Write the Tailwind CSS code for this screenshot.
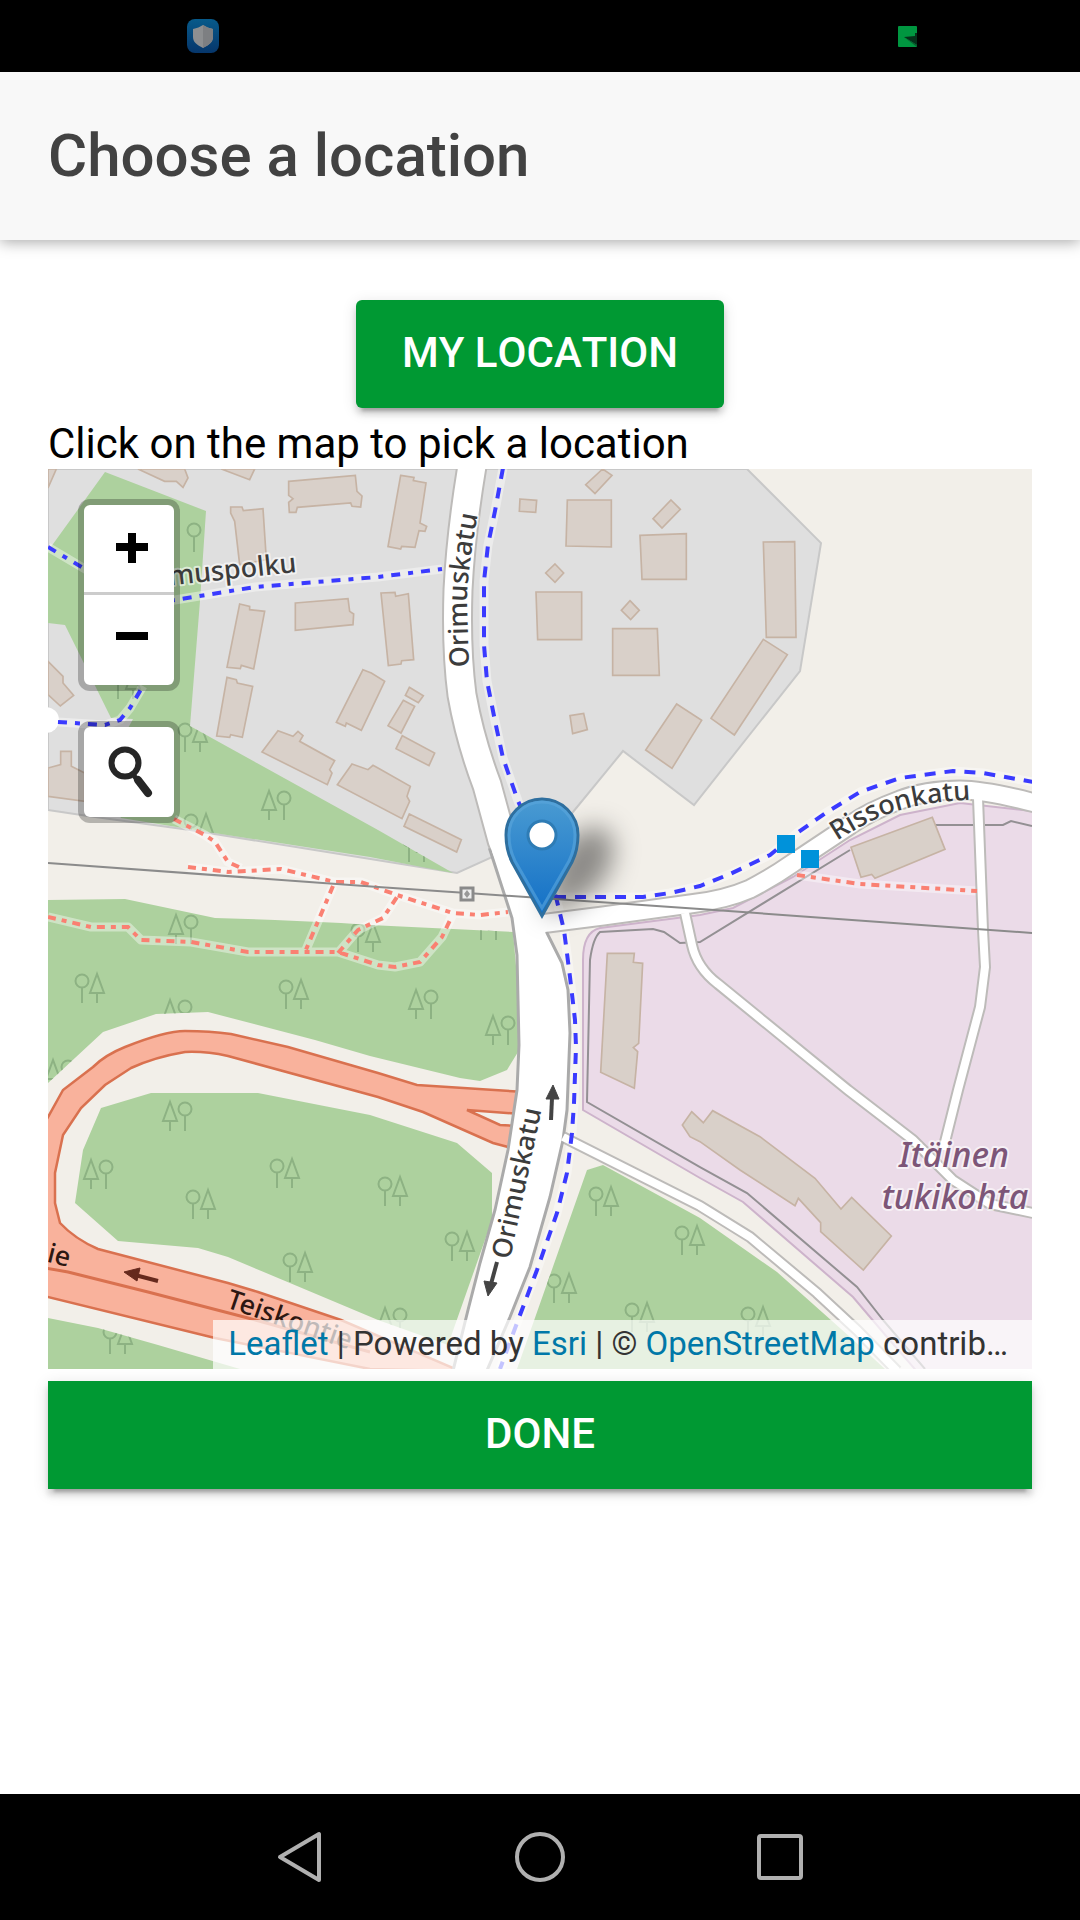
<!DOCTYPE html>
<html lang="en">
<head>
<meta charset="utf-8">
<meta name="viewport" content="width=device-width, initial-scale=1">
<title>Choose a location</title>
<script src="https://cdn.jsdelivr.net/npm/@tailwindcss/browser@4"></script>
</head>
<body class="flex min-h-screen flex-col bg-white font-['Roboto',sans-serif] text-black">

<!-- Status bar -->
<div class="flex h-[72px] items-center justify-between bg-black pr-[163px] pl-[186px]">
  <svg class="size-[34px]" viewBox="0 0 34 34" aria-hidden="true">
    <defs><linearGradient id="tile" x2="0" y2="1"><stop stop-color="#075a8a"/><stop offset="1" stop-color="#06366b"/></linearGradient></defs>
    <rect x="1" y="0" width="32" height="34" rx="8" fill="url(#tile)"/>
    <path d="M17 6c3 2 6 3 10 4v8c0 5-4 8-10 11-6-3-10-6-10-11v-8c4-1 7-2 10-4z" fill="#8d8f91"/>
    <path d="M17 6c3 2 6 3 10 4v8c0 5-4 8-10 11z" fill="#7d7f82"/>
  </svg>
  <svg class="h-[21px] w-[19px]" viewBox="0 0 19 21" aria-hidden="true">
    <rect width="19" height="21" rx="1" fill="#009640"/>
    <path d="M19 7l-2 0v3l-11 1 13 8z" fill="#05301a"/><path d="M6 11l13 8v2z" fill="#0a5a30"/>
  </svg>
</div>

<header class="relative flex h-[168px] items-center bg-[#f8f8f8] px-12 shadow-[0_2px_14px_rgba(0,0,0,0.35)]">
  <h1 class="text-[60px] leading-[72px] font-medium text-[#424242] [font-kerning:none]">Choose a location</h1>
</header>

<main class="flex flex-1 flex-col px-12 pt-[60px]">
  <button type="button" class="h-[108px] self-center rounded-md bg-[#009933] px-[46px] pb-0.5 text-[42px] leading-[42px] font-medium text-white shadow-[0_6px_6px_rgba(0,0,0,0.14),0_9px_3px_-6px_rgba(0,0,0,0.2),0_3px_15px_rgba(0,0,0,0.12)] [font-kerning:none]">MY LOCATION</button>
  <p class="mt-[11px] mb-px text-[42px] leading-[49px]">Click on the map to pick a location</p>

  <section aria-label="Map" class="relative h-[900px] overflow-hidden bg-[#f2efe9]">
    <svg class="block h-full w-full" viewBox="48 469 984 900" preserveAspectRatio="xMidYMid slice" font-family="'Noto Sans','Open Sans',sans-serif">
      <defs>
        <path id="woods" d="M105 472L206 511 200 601 190 726 378 830 453 873 370 857 208 832 121 818 100 780 133 719 111 718 65 625 48 623V551ZM48 900L125 899 215 918 275 920 341 923 370 925 513 932 519 1000 518 1052 507 1070 480 1081 460 1078 370 1056 315 1040 208 1012 156 1014 103 1032 48 1083ZM101 1108L151 1093H258L370 1115 457 1143 492 1173V1220L448 1345 378 1320 228 1257 198 1248 118 1241 75 1203 83 1150ZM48 1318L98 1328 158 1345 240 1369H48ZM587 1170L603 1165 700 1218 777 1272 850 1337 885 1369H517Z"/>
        <clipPath id="woodsClip"><use href="#woods"/></clipPath>
        <g id="oa" fill="none" stroke="#8db283" stroke-width="2"><circle r="6.500"/><path d="M0 7V22M15-7L8 12H22ZM15 12V22"/></g>
        <g id="ao" fill="none" stroke="#8db283" stroke-width="2"><circle cx="15" r="6.500"/><path d="M15 7V22M0-7L-7 12H7ZM0 12V22"/></g>
        <path id="oriTop" d="M469 667L467 600Q468 560 482 495"/>
        <path id="oriLow" d="M510 1260L544 1098"/>
        <path id="risson" d="M837 841C880 813 910 801 990 799"/>
        <path id="footway" d="M48 547L90 572 150 604 255 587 378 577 442 569M58 722L105 725 120 720 130 708 143 686"/>
        <path id="blue" d="M503 468L495 511 488 545 484 581V645L487 681 495 721 503 758 518 801 540 850 556 897 564 930 570 977 575 1020 576 1047 574 1103 572 1133 567 1173 557 1213 537 1270 517 1323 500 1369M555 897H643L670 893 700 886 730 874 770 855 797 833 827 812 860 792 900 778 953 771 983 773 1033 782"/>
        <path id="red" d="M174 819L205 835 215 842 228 862 241 868M188 867L228 872 281 869 335 882H361L397 895 453 913 480 915 508 912M333 886L305 952M48 917L91 927H128L141 940 191 942 248 952H338L378 965 395 967 420 962 442 937 452 916M338 953L358 930 383 918 397 897M797 875L860 884 977 891"/>
        <path id="minor" d="M685 913L692 945Q697 968 718 984L848 1090 913 1140 953 1180 990 1204 1033 1213M978 798L983 930 985 967 980 1007 958 1090 943 1150M563 1137L700 1206 750 1237 817 1293 857 1330 897 1371"/>
        <path id="risRoad" d="M540 924L603 916 690 904Q725 900 750 889 773 877 793 863L850 825Q870 811 900 800 925 790 960 790 985 790 1035 803"/>
        <path id="oriRoad" d="M473 460Q461 530 458 590 456 650 462 695 470 740 487 785L502 840 528 905"/>
        <path id="oriBase" d="M490 850L512 918 517 955 519 1045 517 1090 508 1150 495 1210 480 1263 468 1310 452 1375H485L510 1317 530 1267 550 1197 563 1140 567 1110 570 1033 568 990 562 963 547 933 530 850Z"/>
        <linearGradient id="pin" x2="0" y2="1"><stop stop-color="#4a9bd2"/><stop offset="1" stop-color="#126fc6"/></linearGradient>
        <filter id="soft" x="-60%" y="-60%" width="220%" height="220%"><feGaussianBlur stdDeviation="13"/></filter>
      </defs>

      <!-- Land use -->
      <path d="M48 469H747L821 543 800 671 694 805 623 751 573 812 520 870 492 857 457 873 190 830 88 816 48 810Z" fill="#dfdfdf" stroke="#c8c8c8" stroke-width="2"/>
      <use href="#woods" fill="#add19e"/>
      <path d="M583 960Q583 932 600 928L700 915 733 908 793 877 850 840 900 815 960 803 1040 812V1375H920L887 1337 853 1297 743 1202 700 1178 583 1110Z" fill="#ebdbe8" stroke="#cdb3cb" stroke-width="2"/>
      <g clip-path="url(#woodsClip)">
        <use href="#oa" x="82" y="981"/><use href="#oa" x="286" y="987"/><use href="#oa" x="193" y="1197"/><use href="#oa" x="277" y="1166"/><use href="#oa" x="290" y="1260"/><use href="#oa" x="385" y="1184"/><use href="#oa" x="452" y="1239"/><use href="#oa" x="596" y="1194"/><use href="#oa" x="682" y="1233"/><use href="#oa" x="554" y="1281"/><use href="#oa" x="632" y="1310"/><use href="#oa" x="748" y="1314"/><use href="#oa" x="185" y="730"/><use href="#oa" x="191" y="821"/><use href="#oa" x="358" y="930"/><use href="#oa" x="110" y="1332"/><use href="#oa" x="118" y="677"/><use href="#oa" x="409" y="840"/><use href="#oa" x="481" y="918"/>
        <use href="#ao" x="176" y="922"/><use href="#ao" x="170" y="1007"/><use href="#ao" x="53" y="1067"/><use href="#ao" x="170" y="1109"/><use href="#ao" x="91" y="1167"/><use href="#ao" x="416" y="997"/><use href="#ao" x="493" y="1023"/><use href="#ao" x="385" y="1315"/>
        <g fill="none" stroke="#8db283" stroke-width="2"><circle cx="194" cy="530" r="6.500"/><path d="M194 537V552"/></g>
      </g>
      <use href="#ao" x="269" y="798"/>

      <!-- Fences -->
      <path d="M883 1320L857 1287 747 1193 700 1167 587 1102 590 960Q593 938 600 932L653 929 664 932 680 943 700 942 850 850M933 825H1003L1011 821 1032 826M883 1320L925 1369" fill="none" stroke="#939093" stroke-width="2"/>

      <!-- Buildings -->
      <g fill="#d9d0c9" stroke="#c6b3a4" stroke-width="5">
        <g transform="translate(48 468) scale(.33333)">
          <path d="M0 60L25 3H0ZM270 3L350 40 385 40 405 58 420 30 410 3ZM520 3L605 35 620 3ZM722 40L922 22 927 70 942 84 938 117 912 115 908 105 748 118 744 133 724 133 722 103 735 92 722 82ZM548 117L582 117 586 128 645 122 655 275 575 290 560 160 548 135ZM575 408L605 415 605 425 650 430 617 603 580 592 577 602 537 598ZM742 405L900 392 905 430 917 438 915 470 742 487ZM537 628L565 635 568 645 614 655 583 808 548 800 545 808 506 804ZM945 605L970 615 1010 640 940 787 895 765 892 775 865 763ZM690 788L735 805 750 790 765 803 755 820 860 878 845 905 852 915 838 950 642 852ZM912 888L960 905 975 892 990 900 1087 955 1077 985 1085 1000 1062 1052 868 950ZM0 580L45 625 45 645 77 682 37 714 0 680ZM0 900L38 890V850H70V895L110 915V1000L0 985Z"/>
        </g>
        <g transform="translate(370 468) scale(.33333)">
          <path d="M92 22L132 28 130 38 168 45 150 165 170 175 165 190 147 188 135 238 95 235 92 243 54 236ZM33 375L75 373 77 385 115 377 131 575 95 578 93 588 55 593ZM118 658L160 683 145 704 106 682ZM100 697L134 715 93 795 54 773ZM97 803L194 855 177 893 78 842ZM118 1038L274 1115 260 1152 102 1075ZM450 93L500 97 497 133 448 130ZM698 3L726 22 675 77 647 50ZM592 96H724V237L588 234ZM903 96L931 124 876 180 849 152ZM810 202L949 197V334H816ZM555 288L581 315 555 343 527 315ZM498 372H635V515H503ZM780 398L808 427 782 455 754 427ZM728 482H862L868 622H728ZM600 743L641 736 652 785 608 797ZM920 708L995 757 906 901 827 846Z"/>
        </g>
        <g transform="translate(700 468) scale(.33333)">
          <path d="M190 222L284 221 288 508H199ZM190 514L262 560 103 801 33 751Z"/>
        </g>
        <path transform="translate(370 780) scale(.33333)" d="M712 520H793L790 547 818 550 806 790 790 803 803 815 793 925 692 877Z"/>
        <path transform="translate(700 740) scale(.33333)" d="M453 322L697 232 735 328 525 415 515 403 483 412Z"/>
        <path transform="translate(700 1090) scale(.33333)" d="M-25 65L10 98 38 62 180 140 345 265 423 357 455 322 574 438 490 540 362 425V398L295 325 285 347 120 240 0 155-30 140-53 105Z"/>
      </g>

      <!-- Primary road and ramp -->
      <path d="M40 1130L48 1117 63 1090 93 1067Q105 1055 125 1047C150 1037 170 1031 185 1031Q210 1031 231 1034L288 1047 378 1073 417 1085 525 1092V1150L508 1147 493 1143 423 1112 378 1097 228 1056Q205 1051 185 1052 155 1057 131 1068L105 1085 81 1108 63 1135 55 1173V1203L60 1223Q75 1239 98 1249L228 1283 258 1292 341 1320 460 1371 370 1369 215 1338 40 1295Z" fill="#f9b29c" stroke="#d9714f" stroke-width="2.500"/>
      <path d="M467 1110L520 1114V1126L500 1125Z" fill="#f2efe9" stroke="#d9714f" stroke-width="2.500"/>
      <path d="M40 1267L68 1272 148 1292 248 1318 370 1352" fill="none" stroke="#d9714f" stroke-width="3"/>

      <!-- Path casings, then roads -->
      <g fill="none" stroke="#fff" stroke-opacity=".4" stroke-width="9" stroke-linejoin="round"><use href="#blue"/><use href="#footway"/><use href="#red"/></g>
      <g fill="none" stroke="#bdbbb9">
        <use href="#minor" stroke-width="12"/><use href="#risRoad" stroke-width="21"/><use href="#oriRoad" stroke-width="31"/>
      </g>
      <use href="#oriBase" fill="#fff" stroke="#aaa" stroke-width="3"/>
      <circle cx="46" cy="720" r="13" fill="#fff"/>
      <g fill="none" stroke="#fff">
        <use href="#minor" stroke-width="8"/><use href="#risRoad" stroke-width="17"/><use href="#oriRoad" stroke-width="27"/>
      </g>
      <use href="#red" fill="none" stroke="#fa8072" stroke-width="4" stroke-dasharray="8 6 5 6"/>
      <use href="#blue" fill="none" stroke="#3a3aff" stroke-width="4" stroke-dasharray="11 9"/>
      <use href="#footway" fill="none" stroke="#3a3aff" stroke-width="4" stroke-dasharray="9 8 5 8"/>

      <!-- Power line -->
      <path d="M48 863L378 887 467 893 700 909 1033 933" fill="none" stroke="#8b8b8b" stroke-width="2"/>
      <rect x="461" y="888" width="12" height="12" fill="#eee" stroke="#8a8a8a" stroke-width="3"/><path d="M467 890l3 4-3 4-3-4z" fill="#999"/>

      <!-- Bus stops -->
      <rect x="777" y="835" width="18" height="18" fill="#0092da"/><rect x="801" y="850" width="18" height="18" fill="#0092da"/>

      <!-- One-way and traffic arrows -->
      <g fill="#444" stroke="#444"><path d="M551 1120L552 1098" stroke-width="4"/><path d="M553 1085L559 1099H546Z"/><path d="M497 1262L491 1284" stroke-width="4"/><path d="M488 1296L484 1281 497 1283Z"/></g>
      <g fill="#66291d" stroke="#66291d"><path d="M158 1281L135 1275" stroke-width="4"/><path d="M124 1272L140 1268 137 1281Z"/></g>

      <!-- Labels -->
      <g font-size="27" font-weight="500" fill="#3c3c3c" stroke="#fff" stroke-opacity=".6" stroke-width="4" stroke-linejoin="round" paint-order="stroke">
        <text><textPath href="#oriTop">Orimuskatu</textPath></text>
        <text><textPath href="#oriLow">Orimuskatu</textPath></text>
        <text><textPath href="#risson">Rissonkatu</textPath></text>
        <text transform="translate(297 572) rotate(-6)" text-anchor="end">muspolku</text>
      </g>
      <g font-size="27" font-weight="500" fill="#2c1712">
        <text transform="translate(68 1267) rotate(14)" text-anchor="end">ie</text>
        <text transform="translate(225 1307) rotate(19)">Teiskontie</text>
      </g>
      <g font-size="34" font-style="italic" font-weight="500" fill="#7d5678" stroke="#fff" stroke-opacity=".6" stroke-width="4" stroke-linejoin="round" paint-order="stroke" text-anchor="middle">
        <text x="954" y="1167">Itäinen</text><text x="955" y="1209">tukikohta</text>
      </g>

      <!-- Selected location -->
      <path d="M544 916L555 860Q575 822 605 828 625 850 600 885 580 905 544 916Z" fill="#000" fill-opacity=".42" filter="url(#soft)"/>
      <path d="M542 916L512 862C507 852 506 844 506 835A36 36 0 0 1 578 835C578 844 577 852 572 862Z" fill="url(#pin)" stroke="#2e6f9f" stroke-width="3"/>
      <path d="M542 908L515 861C510 851 509 844 509 835A33 33 0 0 1 575 835C575 844 574 851 569 861Z" fill="none" stroke="#5ba6dc" stroke-opacity=".6" stroke-width="3"/>
      <circle cx="542" cy="835" r="14" fill="#fff" stroke="#2e7cb5" stroke-width="3"/>
    </svg>

    <!-- Map controls -->
    <div class="absolute top-[30px] left-[30px] flex flex-col gap-[30px]">
      <div class="flex w-[102px] flex-col overflow-hidden rounded-xl border-[6px] border-black/25 bg-white bg-clip-padding">
        <button type="button" aria-label="Zoom in" class="flex h-[90px] items-center justify-center border-b-[3px] border-[#ccc]">
          <svg class="h-8 w-[90px]" viewBox="0 0 90 32" aria-hidden="true"><path d="M32 14H64M48-2V30" stroke="#000" stroke-width="8"/></svg>
        </button>
        <button type="button" aria-label="Zoom out" class="flex h-[90px] items-center justify-center">
          <svg class="h-8 w-[90px]" viewBox="0 0 90 32" aria-hidden="true"><path d="M32 12H64" stroke="#000" stroke-width="8"/></svg>
        </button>
      </div>
      <button type="button" aria-label="Search" class="size-[102px] rounded-xl border-[6px] border-black/25 bg-white bg-clip-padding">
        <svg class="size-[90px]" viewBox="0 0 90 90" fill="none" stroke="#262626" aria-hidden="true"><circle cx="41" cy="36" r="13.500" stroke-width="6"/><path d="M50 49L54 53" stroke-width="5"/><path d="M54 53L64 66" stroke-width="8" stroke-linecap="round"/></svg>
      </button>
    </div>
    <div class="absolute right-0 bottom-0 h-[49px] bg-white/70 pr-6 pl-[15px] text-[33px] leading-[47px] whitespace-nowrap text-[#333]"><a href="#" class="text-[#0078a8]">Leaflet</a> | Powered by <a href="#" class="text-[#0078a8]">Esri</a> | © <a href="#" class="text-[#0078a8]">OpenStreetMap</a> contrib…</div>
  </section>

  <button type="button" class="mt-3 h-[108px] w-full bg-[#009933] pb-0.5 text-[42px] leading-[42px] font-medium text-white shadow-[0_6px_6px_rgba(0,0,0,0.14),0_9px_3px_-6px_rgba(0,0,0,0.2),0_3px_15px_rgba(0,0,0,0.12)]">DONE</button>
</main>

<!-- System navigation -->
<nav aria-label="System" class="flex h-[126px] items-center justify-center bg-black text-[#b0b0b0]">
  <button type="button" aria-label="Back" class="flex w-60 justify-center"><svg class="size-[52px]" viewBox="0 0 52 52" fill="none" stroke="currentColor" stroke-width="4" stroke-linejoin="round"><path d="M45 3V49L6 26Z"/></svg></button>
  <button type="button" aria-label="Home" class="flex w-60 justify-center"><svg class="size-[52px]" viewBox="0 0 52 52" fill="none" stroke="currentColor" stroke-width="4"><circle cx="26" cy="26" r="23"/></svg></button>
  <button type="button" aria-label="Recent apps" class="flex w-60 justify-center"><svg class="size-[52px]" viewBox="0 0 52 52" fill="none" stroke="currentColor" stroke-width="4"><rect x="5" y="5" width="42" height="42" rx="2"/></svg></button>
</nav>
</body>
</html>
